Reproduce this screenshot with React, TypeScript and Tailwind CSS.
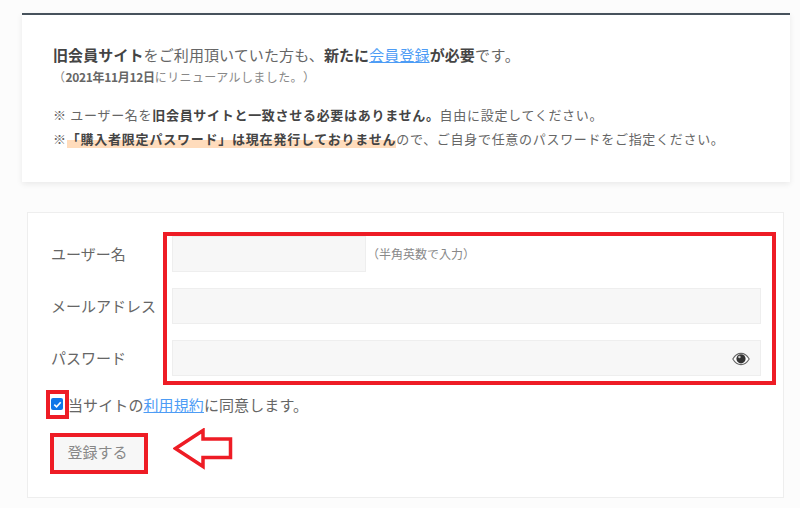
function Row({ label, children }: { label: string; children: React.ReactNode }) {
  return (
    <div className="flex items-center h-9">
      <div className="w-[121px] shrink-0 text-[15px] text-[#666]">{label}</div>
      {children}
    </div>
  )
}

export default function App() {
  return (
    <div className="h-[508px] w-[800px] overflow-hidden bg-[#fcfcfc] pt-[13px] font-['Noto_Sans_CJK_JP','Noto_Sans',sans-serif] [text-spacing-trim:space-all]">
      {/* Notice card */}
      <div className="ml-[22px] h-[169px] w-[768px] border-t-2 border-[#47525c] bg-white pl-[31px] pt-[29px] text-[#666] shadow-[0_2px_6px_rgba(0,0,0,0.08)]">
        <p className="text-[15px] leading-[22px] tracking-[0.1px]">
          <b className="font-bold text-[#444]">旧会員サイト</b>をご利用頂いていた方も、
          <b className="font-bold text-[#444]">新たに</b>
          <a className="text-[#4d9cf5] underline">会員登録</a>
          <b className="font-bold text-[#444]">が必要</b><span className="tracking-[0.6px]">です。</span>
        </p>
        <p className="mt-[2px] text-[12px] leading-[18px] tracking-[0.4px] text-[#888]">
          （<b className="font-bold tracking-[-0.3px] text-[#666]">2021年11月12日</b>にリニューアルしました。）
        </p>
        <p className="mt-[17px] text-[13px] leading-[24px] tracking-[0.7px]">
          ※ ユーザー名を<b className="font-bold text-[#444]">旧会員サイトと一致させる必要はありません。</b>自由に設定してください。
        </p>
        <p className="text-[13px] leading-[24px] tracking-[0.7px]">
          ※
          <b className="bg-[linear-gradient(transparent_60%,#ffdcbc_60%)] font-bold tracking-[0.78px] text-[#444]">「購入者限定パスワード」は現在発行しておりません</b>
          ので、ご自身で任意のパスワードをご指定ください。
        </p>
      </div>

      {/* Registration form */}
      <div className="relative ml-[27px] mt-[30px] h-[286px] w-[757px] border border-[#eeeeee] bg-white pl-[23px] pt-[23px]">
        <div className="flex flex-col gap-4">
          <Row label="ユーザー名">
            <div className="h-9 w-[194px] border border-[#eeeeee] bg-[#f7f7f7]" />
            <span className="ml-[1px] text-[12px] text-[#888]">（半角英数で入力）</span>
          </Row>
          <Row label="メールアドレス">
            <div className="h-9 w-[589px] border border-[#eeeeee] bg-[#f7f7f7]" />
          </Row>
          <Row label="パスワード">
            <div className="relative h-9 w-[589px] border border-[#eeeeee] bg-[#f7f7f7]">
              <svg viewBox="0 0 18 14" className="absolute right-[10px] top-[11px] h-[14px] w-[18px]">
                <path d="M.8 7C3 3.3 5.8 1.4 9 1.4S15 3.3 17.2 7C15 10.7 12.2 12.6 9 12.6S3 10.7 .8 7Z" fill="#fff" stroke="#666" strokeWidth="1.1" />
                <circle cx="9" cy="6.8" r="4.6" fill="#333" />
                <circle cx="7.4" cy="5" r="1.2" fill="#ccc" />
              </svg>
            </div>
          </Row>
        </div>

        <div className="mt-[15px] flex h-7 items-center text-[15px] tracking-[0.1px] text-[#666]">
          <span className="flex h-3 w-3 -translate-y-px items-center justify-center rounded-[2px] bg-[#0f76e8]">
            <svg viewBox="0 0 12 12" className="h-[11px] w-[11px]">
              <path d="M2.5 6.2 5 8.6 9.5 3.6" fill="none" stroke="#fff" strokeWidth="1.8" />
            </svg>
          </span>
          <span className="ml-[5px]">
            当サイトの<a className="text-[#4d9cf5] underline">利用規約</a>に同意します。
          </span>
        </div>

        <div className="ml-[2px] mt-[18px] flex h-[34px] w-[91px] items-center justify-center bg-[#f7f7f7] pb-1 pr-[2px] text-[15px] text-[#888]">
          登録する
        </div>

        {/* Red annotations over the form */}
        <div className="absolute left-[135px] top-[19px] h-[153px] w-[613px] border-4 border-[#ee1c25]" />
        <div className="absolute left-[18px] top-[177px] h-[29px] w-[23px] border-4 border-[#ee1c25]" />
        <div className="absolute left-[22px] top-[220px] h-[41px] w-[98px] border-4 border-[#ee1c25]" />
        <svg viewBox="0 0 60 42" className="absolute left-[145px] top-[215px] h-[42px] w-[60px]">
          <path d="M2.5 20.5 30 2.5V11H57.5V29.5H30V38.5Z" fill="#fff" stroke="#ee1c25" strokeWidth="3.5" />
        </svg>
      </div>
    </div>
  )
}
